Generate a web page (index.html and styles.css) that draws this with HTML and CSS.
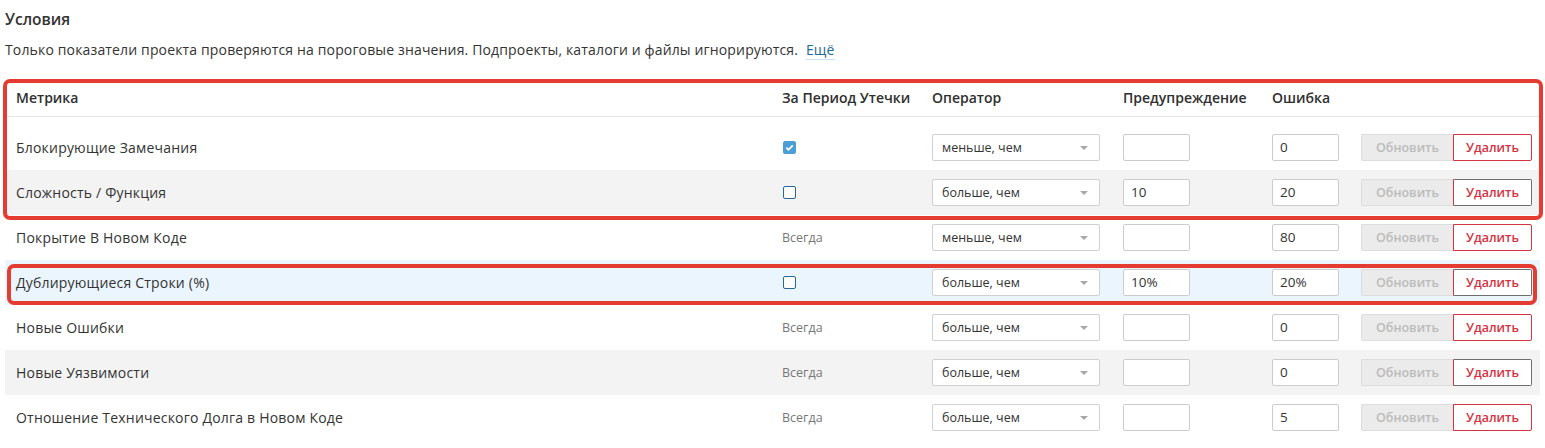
FILE: index.html
```html
<!DOCTYPE html>
<html lang="ru">
<head>
<meta charset="utf-8">
<title>Условия</title>
<link rel="stylesheet" href="styles.css">
</head>
<body>
<div class="page">
  <h2 class="title">Условия</h2>
  <p class="desc">Только показатели проекта проверяются на пороговые значения. Подпроекты, каталоги и файлы игнорируются. <a class="more" href="#">Ещё</a></p>

  <div class="table">
    <div class="row head">
      <div class="cell">Метрика</div>
      <div class="cell">За Период Утечки</div>
      <div class="cell">Оператор</div>
      <div class="cell">Предупреждение</div>
      <div class="cell">Ошибка</div>
      <div class="cell"></div>
    </div>
    <div class="body">
      <div class="row">
        <div class="cell name">Блокирующие Замечания</div>
        <div class="cell"><span class="cb checked"><svg viewBox="0 0 13 13" width="13" height="13"><path d="M3.3 6.7 L5.5 8.8 L9.7 4.4" fill="none" stroke="#fff" stroke-width="1.8"/></svg></span></div>
        <div class="cell"><div class="select">меньше, чем<span class="arrow"></span></div></div>
        <div class="cell"><div class="input"></div></div>
        <div class="cell"><div class="input">0</div></div>
        <div class="cell"><div class="btns"><span class="btn upd">Обновить</span><span class="btn del">Удалить</span></div></div>
      </div>
      <div class="row gray">
        <div class="cell name">Сложность / Функция</div>
        <div class="cell"><span class="cb"></span></div>
        <div class="cell"><div class="select">больше, чем<span class="arrow"></span></div></div>
        <div class="cell"><div class="input">10</div></div>
        <div class="cell"><div class="input">20</div></div>
        <div class="cell"><div class="btns"><span class="btn upd">Обновить</span><span class="btn del dark">Удалить</span></div></div>
      </div>
      <div class="row">
        <div class="cell name">Покрытие В Новом Коде</div>
        <div class="cell"><span class="always">Всегда</span></div>
        <div class="cell"><div class="select">меньше, чем<span class="arrow"></span></div></div>
        <div class="cell"><div class="input"></div></div>
        <div class="cell"><div class="input">80</div></div>
        <div class="cell"><div class="btns"><span class="btn upd">Обновить</span><span class="btn del">Удалить</span></div></div>
      </div>
      <div class="row blue">
        <div class="cell name">Дублирующиеся Строки (%)</div>
        <div class="cell"><span class="cb"></span></div>
        <div class="cell"><div class="select">больше, чем<span class="arrow"></span></div></div>
        <div class="cell"><div class="input">10%</div></div>
        <div class="cell"><div class="input">20%</div></div>
        <div class="cell"><div class="btns"><span class="btn upd">Обновить</span><span class="btn del dark">Удалить</span></div></div>
      </div>
      <div class="row">
        <div class="cell name">Новые Ошибки</div>
        <div class="cell"><span class="always">Всегда</span></div>
        <div class="cell"><div class="select">больше, чем<span class="arrow"></span></div></div>
        <div class="cell"><div class="input"></div></div>
        <div class="cell"><div class="input">0</div></div>
        <div class="cell"><div class="btns"><span class="btn upd">Обновить</span><span class="btn del">Удалить</span></div></div>
      </div>
      <div class="row gray">
        <div class="cell name">Новые Уязвимости</div>
        <div class="cell"><span class="always">Всегда</span></div>
        <div class="cell"><div class="select">больше, чем<span class="arrow"></span></div></div>
        <div class="cell"><div class="input"></div></div>
        <div class="cell"><div class="input">0</div></div>
        <div class="cell"><div class="btns"><span class="btn upd">Обновить</span><span class="btn del dark">Удалить</span></div></div>
      </div>
      <div class="row">
        <div class="cell name">Отношение Технического Долга в Новом Коде</div>
        <div class="cell"><span class="always">Всегда</span></div>
        <div class="cell"><div class="select">больше, чем<span class="arrow"></span></div></div>
        <div class="cell"><div class="input"></div></div>
        <div class="cell"><div class="input">5</div></div>
        <div class="cell"><div class="btns"><span class="btn upd">Обновить</span><span class="btn del">Удалить</span></div></div>
      </div>
    </div>
    <div class="mark mark-1"></div>
    <div class="mark mark-2"></div>
  </div>
</div>
</body>
</html>
```

FILE: styles.css
```css
* { box-sizing: border-box; }
html, body { margin: 0; padding: 0; background: #fff; }
body {
  font-family: "Open Sans", "Noto Sans", "Liberation Sans", sans-serif;
  font-size: 14px;
  color: #333;
}
.page { padding: 8px 0 0 5px; }
.title {
  margin: 0;
  font-size: 15.5px;
  font-weight: 600;
  line-height: 22px;
  color: #333;
}
.desc {
  margin: 9px 0 0;
  font-size: 14px;
  line-height: 22px;
  letter-spacing: 0.15px;
  color: #333;
}
.more {
  margin-left: 4px;
  color: #236a97;
  text-decoration: none;
  border-bottom: 1px solid #cae3f2;
}
.table {
  position: relative;
  margin-top: 19px;
  width: 1535px;
}
.row {
  display: grid;
  grid-template-columns: 766px 150px 191px 149px 90px 1fr;
  height: 45px;
  align-items: center;
  font-size: 14px;
}
.row.head {
  height: 37px;
  border-bottom: 1px solid #e6e6e6;
  font-weight: 600;
  padding-bottom: 1px;
  color: #2f2f2f;
}
.body { padding-top: 8px; }
.row.gray { background: #f3f3f3; }
.row.blue { background: #ebf5fd; }
.cell {
  padding: 0 0 0 11px;
  white-space: nowrap;
  display: flex;
  align-items: center;
}
.cell.name { letter-spacing: 0.2px; }
.cb {
  display: inline-block;
  width: 13px;
  height: 13px;
  margin-left: 1px;
  margin-top: -1px;
  border: 1px solid #236a97;
  border-radius: 2px;
  background: #fff;
}
.cb.checked {
  border-color: #4b9fd5;
  background: #4b9fd5;
  position: relative;
}
.cb.checked svg { position: absolute; left: -1px; top: -1px; }
.always { color: #777; font-size: 12.5px; }
.select {
  position: relative;
  width: 168px;
  height: 27px;
  border: 1px solid #d0d0d0;
  border-radius: 2px;
  background: #fff;
  padding-left: 9px;
  line-height: 25px;
  font-size: 12.5px;
  color: #333;
}
.arrow {
  position: absolute;
  right: 11px;
  top: 11px;
  width: 0;
  height: 0;
  border-left: 4px solid transparent;
  border-right: 4px solid transparent;
  border-top: 4px solid #a8a8a8;
}
.input {
  width: 67px;
  height: 27px;
  border: 1px solid #ccc;
  border-radius: 2px;
  background: #fff;
  padding-left: 7px;
  line-height: 25px;
  font-size: 13.5px;
  color: #333;
}
.btns { display: flex; margin-left: -1px; }
.btn {
  display: inline-flex;
  align-items: center;
  justify-content: center;
  height: 27px;
  border-radius: 2px;
  font-size: 12.5px;
  font-weight: 600;
}
.btn.upd {
  width: 92px;
  background: #ebebeb;
  border: 1px solid #ddd;
  color: #bbb;
  border-right: none;
  border-radius: 2px 0 0 2px;
}
.btn.del {
  width: 79px;
  background: #fff;
  border: 1px solid #d4333f;
  color: #d4333f;
  border-radius: 0 2px 2px 0;
}
.btn.del.dark {
  border-color: #6e6e6e;
  border-left-color: #d4333f;
}
.mark {
  position: absolute;
  border: 4px solid #e43c31;
  border-radius: 7px;
  pointer-events: none;
}
.mark-1 { left: -2px; top: -1px; width: 1540px; height: 141px; }
.mark-2 { left: 2px; top: 184px; width: 1530px; height: 41px; }
```
